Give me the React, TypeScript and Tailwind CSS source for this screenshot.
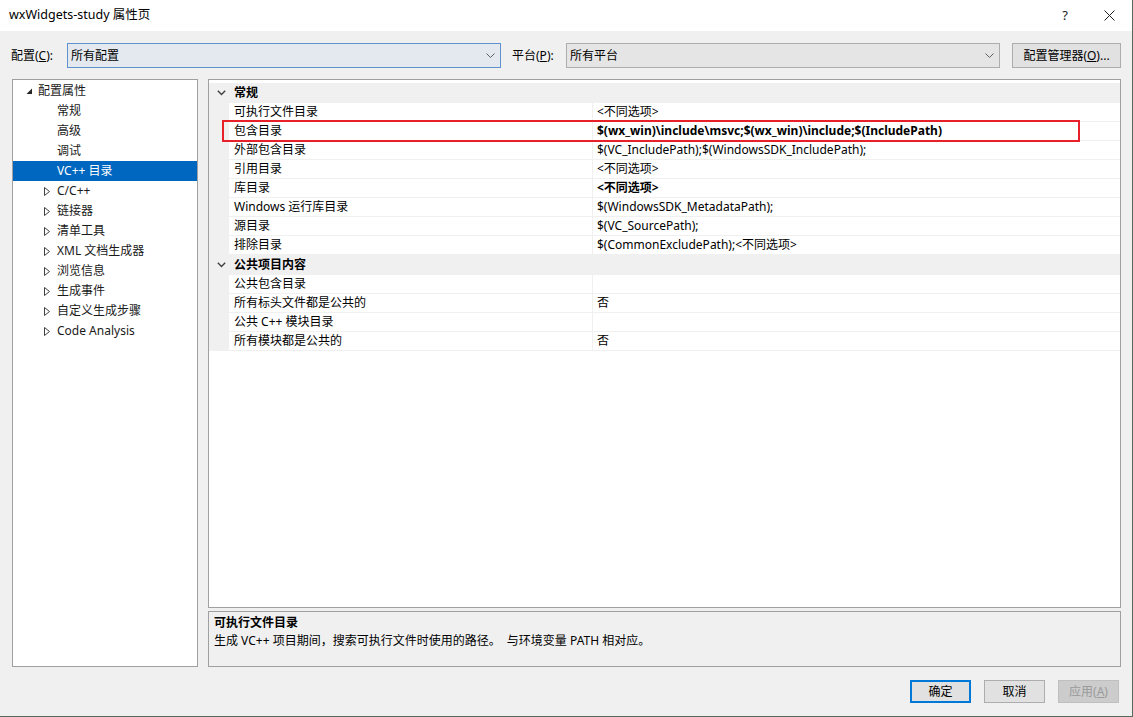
import React from 'react'

const FONT = "font-['Noto_Sans','Noto_Sans_CJK_SC',sans-serif]"

type TreeItem = { label: string; expander?: 'open' | 'closed'; indent: number; selected?: boolean }

const TREE: TreeItem[] = [
  { label: '配置属性', expander: 'open', indent: 0 },
  { label: '常规', indent: 1 },
  { label: '高级', indent: 1 },
  { label: '调试', indent: 1 },
  { label: 'VC++ 目录', indent: 1, selected: true },
  { label: 'C/C++', expander: 'closed', indent: 1 },
  { label: '链接器', expander: 'closed', indent: 1 },
  { label: '清单工具', expander: 'closed', indent: 1 },
  { label: 'XML 文档生成器', expander: 'closed', indent: 1 },
  { label: '浏览信息', expander: 'closed', indent: 1 },
  { label: '生成事件', expander: 'closed', indent: 1 },
  { label: '自定义生成步骤', expander: 'closed', indent: 1 },
  { label: 'Code Analysis', expander: 'closed', indent: 1 },
]

type Row =
  | { kind: 'cat'; label: string }
  | { kind: 'prop'; name: string; value: string; bold?: boolean }

const ROWS: Row[] = [
  { kind: 'cat', label: '常规' },
  { kind: 'prop', name: '可执行文件目录', value: '<不同选项>' },
  { kind: 'prop', name: '包含目录', value: '$(wx_win)\\include\\msvc;$(wx_win)\\include;$(IncludePath)', bold: true },
  { kind: 'prop', name: '外部包含目录', value: '$(VC_IncludePath);$(WindowsSDK_IncludePath);' },
  { kind: 'prop', name: '引用目录', value: '<不同选项>' },
  { kind: 'prop', name: '库目录', value: '<不同选项>', bold: true },
  { kind: 'prop', name: 'Windows 运行库目录', value: '$(WindowsSDK_MetadataPath);' },
  { kind: 'prop', name: '源目录', value: '$(VC_SourcePath);' },
  { kind: 'prop', name: '排除目录', value: '$(CommonExcludePath);<不同选项>' },
  { kind: 'cat', label: '公共项目内容' },
  { kind: 'prop', name: '公共包含目录', value: '' },
  { kind: 'prop', name: '所有标头文件都是公共的', value: '否' },
  { kind: 'prop', name: '公共 C++ 模块目录', value: '' },
  { kind: 'prop', name: '所有模块都是公共的', value: '否' },
]

const ComboArrow = () => (
  <svg width="9" height="6" viewBox="0 0 9 6" className="shrink-0">
    <polyline points="0.5,0.5 4.5,4.5 8.5,0.5" fill="none" stroke="#606060" strokeWidth="1" />
  </svg>
)

const Expander = ({ type }: { type: 'open' | 'closed' }) =>
  type === 'open' ? (
    <svg width="7" height="7" viewBox="0 0 7 7">
      <polygon points="6,0.5 6,6 0.5,6" fill="#262626" />
    </svg>
  ) : (
    <svg width="6" height="9" viewBox="0 0 6 9">
      <polygon points="0.5,0.5 5.5,4.5 0.5,8.5" fill="none" stroke="#404040" strokeWidth="1" />
    </svg>
  )

const Chevron = () => (
  <svg width="9" height="6" viewBox="0 0 9 6">
    <polyline points="0.8,0.8 4.5,4.5 8.2,0.8" fill="none" stroke="#404040" strokeWidth="1.4" />
  </svg>
)

const App = () => {
  return (
    <div className={`${FONT} w-[1133px] h-[717px] box-border border-r border-b border-[#56695c] bg-[#f0f0f0] text-[12px] text-black flex flex-col overflow-hidden`}>
      {/* title bar */}
      <div className="h-[31px] bg-white flex items-center shrink-0">
        <span className="pl-[9px] text-[12.5px] text-black">wxWidgets-study 属性页</span>
        <div className="ml-auto flex items-center">
          <span className="w-[44px] text-center text-[13px] text-[#222]">?</span>
          <div className="w-[45px] flex justify-center">
            <svg width="11" height="11" viewBox="0 0 11 11">
              <path d="M0.5 0.5 L10.5 10.5 M10.5 0.5 L0.5 10.5" stroke="#222" strokeWidth="1" />
            </svg>
          </div>
        </div>
      </div>

      {/* config row */}
      <div className="mt-[12px] h-[25px] flex items-center shrink-0">
        <span className="pl-[11px] w-[67px]">配置(<span className="underline">C</span>):</span>
        <div className="w-[434px] h-[25px] box-border border border-[#5f93cc] bg-[#e3e9ef] flex items-center pl-[3px] pr-[5px]">
          <span className="flex-1">所有配置</span>
          <ComboArrow />
        </div>
        <span className="ml-[11px] w-[54px]">平台(<span className="underline">P</span>):</span>
        <div className="w-[434px] h-[25px] box-border border border-[#adadad] bg-[#e5e5e5] flex items-center pl-[3px] pr-[5px]">
          <span className="flex-1">所有平台</span>
          <ComboArrow />
        </div>
        <div className="ml-[12px] w-[109px] h-[25px] box-border border border-[#adadad] bg-[#e1e1e1] flex items-center justify-center">
          配置管理器(<span className="underline">O</span>)...
        </div>
      </div>

      {/* main area */}
      <div className="mt-[11px] h-[588px] flex shrink-0">
        {/* tree */}
        <div className="ml-[12px] w-[186px] box-border border border-[#a0a0a0] bg-white pt-[1px]">
          {TREE.map((t) => (
            <div
              key={t.label}
              className={`h-[20px] flex items-center ${t.selected ? 'bg-[#0067c0] text-white' : 'text-[#1a1a1a]'}`}
            >
              {t.indent === 0 ? (
                <>
                  <span className="w-[25px] flex justify-end pr-[5px]">
                    {t.expander && <Expander type={t.expander} />}
                  </span>
                  <span>{t.label}</span>
                </>
              ) : (
                <>
                  <span className="w-[44px] flex justify-end pr-[7px]">
                    {t.expander && <Expander type={t.expander} />}
                  </span>
                  <span>{t.label}</span>
                </>
              )}
            </div>
          ))}
        </div>

        {/* property grid + description */}
        <div className="ml-[10px] w-[913px] flex flex-col">
          <div className="relative h-[529px] box-border border border-[#a0a0a0] bg-white pt-[3px]">
            {ROWS.map((r, i) =>
              r.kind === 'cat' ? (
                <div key={i} className="h-[20px] bg-[#f0f0f0] flex items-center">
                  <span className="w-[25px] flex justify-center">
                    <Chevron />
                  </span>
                  <span className="font-bold">{r.label}</span>
                </div>
              ) : (
                <div key={i} className="h-[19px] flex">
                  <div className="w-[20px] bg-[#f0f0f0]" />
                  <div className="w-[364px] box-border border-b border-r border-[#f0f0f0] pl-[5px] flex items-center">
                    {r.name}
                  </div>
                  <div className={`flex-1 box-border border-b border-[#f0f0f0] pl-[4px] flex items-center ${r.bold ? 'font-bold' : ''}`}>
                    {r.value}
                  </div>
                </div>
              )
            )}
            {/* highlight box */}
            <div className="absolute left-[13px] top-[40px] w-[858px] h-[22px] border-2 border-[#e8202a] pointer-events-none" />
          </div>
          <div className="mt-[3px] h-[56px] box-border border border-[#a0a0a0] bg-[#f0f0f0] px-[5px] pt-[2px]">
            <div className="font-bold leading-[18px]">可执行文件目录</div>
            <div className="leading-[18px]">生成 VC++ 项目期间，搜索可执行文件时使用的路径。&nbsp;&nbsp;与环境变量 PATH 相对应。</div>
          </div>
        </div>
      </div>

      {/* buttons */}
      <div className="mt-[13px] flex justify-end pr-[13px] gap-[13px]">
        <div className="w-[61px] h-[23px] box-border border-2 border-[#0078d7] bg-[#e1e1e1] flex items-center justify-center">确定</div>
        <div className="w-[61px] h-[23px] box-border border border-[#adadad] bg-[#e1e1e1] flex items-center justify-center">取消</div>
        <div className="w-[61px] h-[23px] box-border border border-[#bfbfbf] bg-[#cccccc] text-[#9a9a9a] flex items-center justify-center">
          应用(<span className="underline">A</span>)
        </div>
      </div>
    </div>
  )
}

export default App
